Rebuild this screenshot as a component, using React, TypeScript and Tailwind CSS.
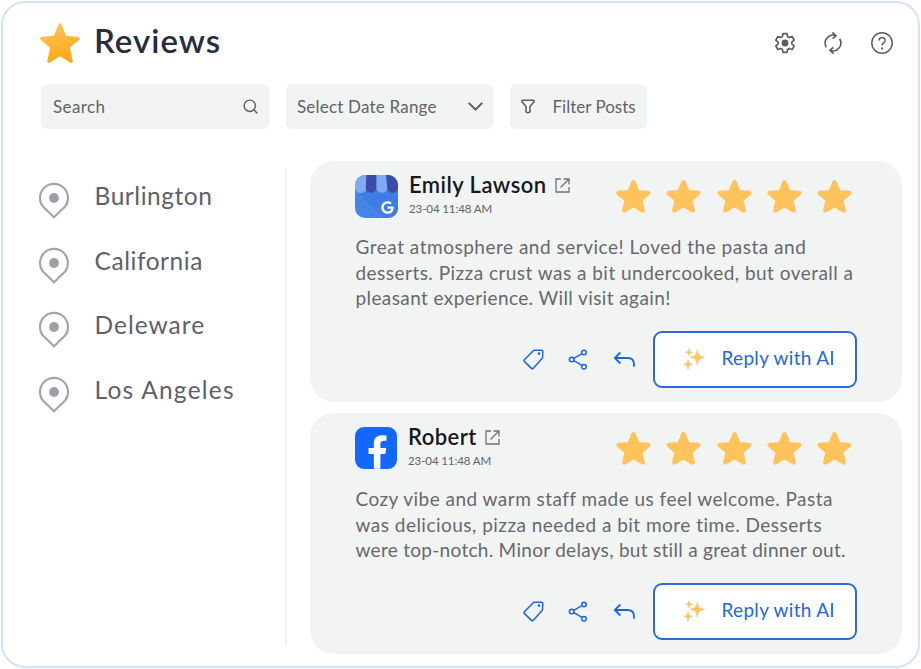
import { ChevronDown, Search } from 'lucide-react';
import { FaFacebookF, FaGoogle } from 'react-icons/fa';

const locations = [
  { name: 'Burlington', tracking: 'tracking-[0.55px]' },
  { name: 'California', tracking: 'tracking-[0.55px]' },
  { name: 'Deleware', tracking: 'tracking-[1px]' },
  { name: 'Los Angeles', tracking: 'tracking-[1.25px]' },
];

const reviews = [
  {
    name: 'Emily Lawson',
    source: 'google',
    date: '23-04 11:48 AM',
    lines: [
      { text: 'Great atmosphere and service! Loved the pasta and', tracking: 'tracking-[0.51px]' },
      { text: 'desserts. Pizza crust was a bit undercooked, but overall a', tracking: 'tracking-[0.47px]' },
      { text: 'pleasant experience. Will visit again!', tracking: 'tracking-[0.4px]' },
    ],
  },
  {
    name: 'Robert',
    source: 'facebook',
    date: '23-04 11:48 AM',
    lines: [
      { text: 'Cozy vibe and warm staff made us feel welcome. Pasta', tracking: 'tracking-[0.47px]' },
      { text: 'was delicious, pizza needed a bit more time. Desserts', tracking: 'tracking-[0.48px]' },
      { text: 'were top-notch. Minor delays, but still a great dinner out.', tracking: 'tracking-[0.29px]' },
    ],
  },
];

function TitleStar() {
  return (
    <svg className="h-[41px] w-10 shrink-0" viewBox="0 0 40 41">
      <defs>
        <linearGradient id="title-star" x1="0" y1="0" x2="0.3" y2="1">
          <stop offset="0" stopColor="#ffc45c" />
          <stop offset="1" stopColor="#fdab1c" />
        </linearGradient>
      </defs>
      <path
        d="M20 1.7 25 14l13.300 1.500L28.300 24l3 14.500L20 31.500 8.700 38.500l3-14.500L1.700 15.500 15 14z"
        fill="url(#title-star)"
        stroke="url(#title-star)"
        strokeWidth="3"
        strokeLinejoin="round"
      />
    </svg>
  );
}

function RatingStar() {
  return (
    <svg className="h-[33px] w-[35px]" viewBox="0 0.6 35 33">
      <path
        d="M17.500 3 21.600 12.900 32.200 13.700 24.100 20.600 26.600 31 17.500 25.400 8.400 31 10.900 20.600 2.800 13.700 13.400 12.900z"
        fill="#ffc35b"
        stroke="#ffc35b"
        strokeWidth="4.600"
        strokeLinejoin="round"
      />
    </svg>
  );
}

function GearIcon() {
  return (
    <svg className="size-[22px]" viewBox="-11 -11 22 22" fill="none" stroke="#5d5d5d" strokeWidth="1.700" strokeLinejoin="round">
      <path d="M-2 -9.400H2L2.600 -6.400 4.250 -5.440 7.100 -6.500 9.200 -2.900 6.830 -.96V.96L9.200 2.900 7.100 6.500 4.250 5.440 2.600 6.400 2 9.400H-2L-2.600 6.400-4.250 5.440-7.100 6.500-9.200 2.900-6.830 .96V-.96L-9.200-2.900-7.100-6.500-4.250-5.440-2.600-6.400z" />
      <circle r="3.400" fill="#5d5d5d" stroke="none" />
    </svg>
  );
}

function RefreshIcon() {
  return (
    <svg className="size-6" viewBox="-12 -12 24 24" fill="none" stroke="#5d5d5d" strokeWidth="1.600" strokeLinejoin="round">
      <path d="M-6.600 4.200A7.800 7.800 0 0 1 3-7.200" />
      <path d="M-.6-10.600 3.100-7.200-.4-4.500" />
      <path d="M6.600-4.200A7.800 7.800 0 0 1-3 7.200" />
      <path d="M.6 10.600-3.100 7.200.4 4.500" />
    </svg>
  );
}

function HelpIcon() {
  return (
    <svg className="size-6" viewBox="-12 -12 24 24" fill="none" stroke="#5d5d5d" strokeWidth="1.500">
      <circle r="10.200" />
      <path d="M-2.900-2.400c0-1.900 1.300-3 3-3s3 1.100 3 2.800c0 2.400-3 2.500-3 5.100" />
      <circle cx="0.100" cy="5.400" r="1.100" fill="#5d5d5d" stroke="none" />
    </svg>
  );
}

function FilterIcon() {
  return (
    <svg className="h-[15px] w-[14px]" viewBox="0 0 14 15" fill="none" stroke="#5d5d5d" strokeWidth="1.500" strokeLinejoin="round">
      <path d="M1 1.200h12v1.600L9 7.600v5.200c-.9 1.100-3.100 1.100-4 0V7.600L1 2.800z" />
    </svg>
  );
}

function PinIcon() {
  return (
    <svg className="h-[38px] w-8 shrink-0" viewBox="0 0 32 38" fill="none">
      <path d="M16 36.200 4.700 25.200a14 14 0 1 1 22.600 0z" stroke="#a3a5ae" strokeWidth="2.200" />
      <circle cx="16" cy="17" r="4.900" fill="#9d9fa9" />
    </svg>
  );
}

function ExternalIcon() {
  return (
    <svg className="size-[15px]" viewBox="0 0 15 15" fill="none" stroke="#6f7173" strokeWidth="1.300">
      <path d="M6 1H1v13h13V9M8.500 1H14v5.500M14 1 5.500 9.500" />
    </svg>
  );
}

function TagIcon() {
  return (
    <svg className="size-[21px]" viewBox="0 0 21 21" fill="none" stroke="#1d66dc" strokeWidth="1.500" strokeLinejoin="round">
      <path d="M10.800 1.300h7.800c.8 0 1.200.5 1.200 1.200l-.3 6.500-9.400 10.400c-.5.500-1.100.5-1.600 0l-7-6.800c-.6-.6-.6-1.200-.1-1.800z" />
      <circle cx="16" cy="4.600" r="1.300" fill="#1d66dc" stroke="none" />
    </svg>
  );
}

function ShareIcon() {
  return (
    <svg className="size-[21px]" viewBox="0 0 21 21" fill="none" stroke="#1d66dc" strokeWidth="1.500">
      <circle cx="3.700" cy="10.500" r="2.300" />
      <circle cx="16" cy="3.500" r="2.300" />
      <circle cx="16" cy="17.700" r="2.300" />
      <path d="M5.800 9.300 13.900 4.700M5.800 11.700l8.100 4.700" />
    </svg>
  );
}

function ReplyIcon() {
  return (
    <svg className="size-[22px]" viewBox="0 0 22 22" fill="none" stroke="#1d66dc" strokeWidth="1.800">
      <path d="M7.300 4.500 1.800 10l5.500 5.500M1.800 10h12.700c4 0 6.500 2.300 6.500 6.300v2.400" />
    </svg>
  );
}

function SparkleIcon() {
  return (
    <svg className="size-[22px]" viewBox="0 0 22 22" fill="#fdc365" stroke="#fdc365" strokeWidth="0.800">
      <path d="M14.300 2.200c.9 4.900 2 6 7.200 7.100-5.200 1.100-6.300 2.200-7.200 7.700-.9-5.500-2-6.600-7-7.700 5-1.100 6.100-2.200 7-7.100z" />
      <path d="M6 .8c.4 2.400 1 3 3.400 3.500C7 4.800 6.400 5.400 6 7.900c-.4-2.500-1-3.100-3.200-3.600C5 3.800 5.600 3.200 6 .8z" />
      <path d="M5 12c.5 3 1.200 3.700 4.300 4.300C6.200 17 5.500 17.700 5 21.500c-.5-3.800-1.200-4.500-4.200-5.200C3.800 15.700 4.500 15 5 12z" />
    </svg>
  );
}

function GoogleLogo() {
  return (
    <div className="relative size-[43px] shrink-0 overflow-hidden rounded-[10px] bg-[#4684ea]">
      <svg className="size-full" viewBox="0 0 43 43">
        <path d="M2 17 28 43h15V14z" fill="#3f7de2" />
        <path d="M0 0h11.500v12.500a5.600 5.600 0 0 1-11.500 0z" fill="#7fabf3" />
        <path d="M11.500 0h10v12.500a5.200 5.200 0 0 1-10.700 0z" fill="#3b4ba6" />
        <path d="M21.500 0h9.700l1 12.500a5.300 5.300 0 0 1-10.700 0z" fill="#7fabf3" />
        <path d="M31.200 0H43v12.500a5.400 5.400 0 0 1-10.800 0z" fill="#3b4ba6" />
      </svg>
      <FaGoogle className="absolute top-[26px] left-[26px] size-[13px] text-white" />
    </div>
  );
}

function FacebookLogo() {
  return (
    <div className="flex size-[42px] shrink-0 items-end justify-center overflow-hidden rounded-[9px] bg-[#1268fd] pl-[2px]">
      <FaFacebookF className="h-[34px] w-[21px] text-white" />
    </div>
  );
}

function ReviewCard({ review }: { review: (typeof reviews)[number] }) {
  return (
    <article className="h-[241px] rounded-[24px] bg-[#f2f4f4] pt-[14px] pr-[45px] pl-[45px]">
      <div className="flex h-[43px] justify-between">
        <div className="flex gap-[11px]">
          {review.source === 'google' ? <GoogleLogo /> : <FacebookLogo />}
          <div className="flex flex-col whitespace-nowrap">
            <div className="-mt-px flex h-[22px] items-center gap-[8px]">
              <h2 className="text-[22px] leading-[22px] font-semibold tracking-[0.45px] text-[#15181c]">{review.name}</h2>
              <ExternalIcon />
            </div>
            <p className="mt-[6px] text-[11.500px] leading-[14px] tracking-[-0.1px] text-[#606366]">{review.date}</p>
          </div>
        </div>
        <div className="mt-[5px] mr-[5px] flex gap-[15.200px]">
          {[1, 2, 3, 4, 5].map((n) => (
            <RatingStar key={n} />
          ))}
        </div>
      </div>

      <div className="mt-4 ml-[0.500px] text-[19px] leading-[25.500px] whitespace-nowrap text-[#65696d]">
        {review.lines.map((line) => (
          <p key={line.text} className={line.tracking}>
            {line.text}
          </p>
        ))}
      </div>

      <div className="mt-5 flex items-center justify-end">
        <div className="mr-[18px] flex items-center gap-[24px]">
          <TagIcon />
          <ShareIcon />
          <ReplyIcon />
        </div>
        <button className="flex h-[57px] w-[204px] items-center rounded-[9px] border-2 border-[#2a6bdb] bg-white pl-7 text-[19px] tracking-[0.3px] whitespace-nowrap text-[#2468dc]">
          <SparkleIcon />
          <span className="-mt-[2px] ml-[16.500px]">Reply with AI</span>
        </button>
      </div>
    </article>
  );
}

export default function App() {
  return (
    <main className="h-[669px] w-[921px] bg-white p-px font-['Lato',sans-serif]">
      <div className="h-[667px] w-[919px] rounded-[24px] border-[2px] border-[#d2e2fd] bg-white pr-[15px] pl-[37px]">
        <header className="flex items-center justify-between pt-5">
          <div className="flex items-center gap-[14px]">
            <TitleStar />
            <h1 className="-mt-[7px] text-[33px] leading-10 font-semibold tracking-[1px] text-[#272d3f]">Reviews</h1>
          </div>
          <div className="-mt-[2px] mr-[9px] flex items-center gap-[25px]">
            <GearIcon />
            <RefreshIcon />
            <HelpIcon />
          </div>
        </header>

        <div className="mt-5 ml-px flex gap-[17px] text-[17px] whitespace-nowrap text-[#5f636a]">
          <div className="flex h-[45px] w-[228px] items-center justify-between rounded-md bg-[#f2f4f4] pr-[10px] pl-3">
            <span className="tracking-[0.4px]">Search</span>
            <Search className="size-[17px] text-[#5d5d5d]" />
          </div>
          <div className="flex h-[45px] w-[207px] items-center justify-between rounded-md bg-[#f2f4f4] pr-[5px] pl-[11px]">
            <span className="tracking-[0.2px]">Select Date Range</span>
            <ChevronDown className="size-[25px] text-[#5d5d5d]" />
          </div>
          <div className="flex h-[45px] w-[137px] items-center rounded-md bg-[#f2f4f4] pl-[11px]">
            <FilterIcon />
            <span className="ml-[17.500px]">Filter Posts</span>
          </div>
        </div>

        <div className="mt-[32px] flex">
          <aside className="mt-[7px] -ml-[2px] h-[478px] w-[249px] border-r-2 border-[#f2f3f4] pt-[13px] text-[24.500px] text-[#5d616b]">
            {locations.map((location) => (
              <div key={location.name} className="flex h-[64.500px] gap-[24.500px] leading-[30px]">
                <PinIcon />
                <span className={location.tracking}>{location.name}</span>
              </div>
            ))}
          </aside>
          <section className="ml-[23px] flex w-[592px] shrink-0 flex-col gap-[11px]">
            {reviews.map((review) => (
              <ReviewCard key={review.name} review={review} />
            ))}
          </section>
        </div>
      </div>
    </main>
  );
}
